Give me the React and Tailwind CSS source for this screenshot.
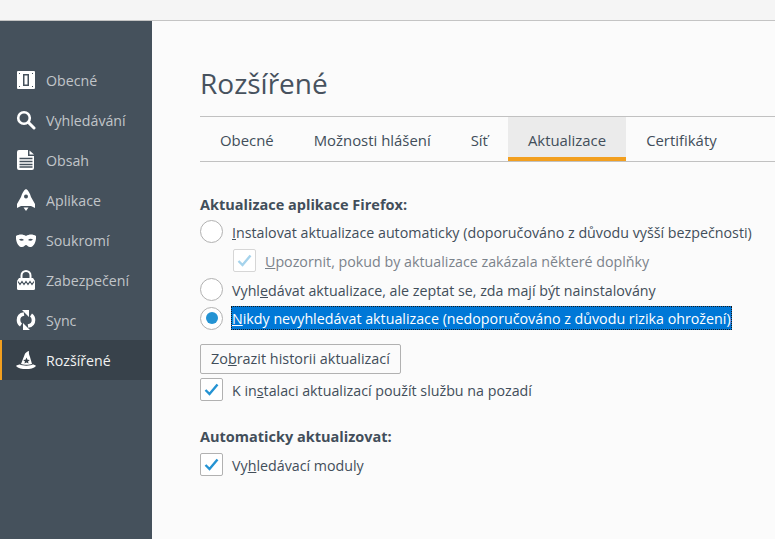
const font = { fontFamily: '"Open Sans", sans-serif' };

const sideItems = [
  { label: 'Obecné', icon: <GeneralIcon /> },
  { label: 'Vyhledávání', icon: <SearchIcon /> },
  { label: 'Obsah', icon: <ContentIcon /> },
  { label: 'Aplikace', icon: <AppsIcon /> },
  { label: 'Soukromí', icon: <MaskIcon /> },
  { label: 'Zabezpečení', icon: <LockIcon /> },
  { label: 'Sync', icon: <SyncIcon /> },
  { label: 'Rozšířené', icon: <WizardIcon />, active: true },
];

function GeneralIcon() {
  return (
    <svg width="18" height="18" viewBox="0 0 18 18">
      <path fillRule="evenodd" fill="#fff" d="M1 0h16a1 1 0 0 1 1 1v16a1 1 0 0 1-1 1H1a1 1 0 0 1-1-1V1a1 1 0 0 1 1-1zM6 3v12h6V3zM7.500 4.500h3v9h-3z" />
      <path fill="#45515c" d="M2 2h1v1H2zM15 2h1v1h-1zM2 15h1v1H2zM15 15h1v1h-1z" />
    </svg>
  );
}

function SearchIcon() {
  return (
    <svg width="20" height="20" viewBox="0 0 20 20" fill="none" stroke="#fff">
      <circle cx="8" cy="8" r="5.800" strokeWidth="2.600" />
      <path d="M12.500 12.500L18 18" strokeWidth="3" strokeLinecap="round" />
    </svg>
  );
}

function ContentIcon() {
  return (
    <svg width="18" height="20" viewBox="0 0 18 20">
      <path fill="#fff" d="M2 0h9v6h6v12a2 2 0 0 1-2 2H2a2 2 0 0 1-2-2V2a2 2 0 0 1 2-2zM12.500 .5L17 4.500h-4.500z" />
      <path stroke="#45515c" strokeWidth="1.300" d="M2.500 8.500h13M2.500 11.500h13M2.500 14.500h13M2.500 17h13" />
    </svg>
  );
}

function AppsIcon() {
  return (
    <svg width="18" height="22" viewBox="0 0 18 22">
      <path fill="#fff" d="M9 0c2 1 4 4 5 8l4 7v4l-4-2H4l-4 2v-4l4-7c1-4 3-7 5-8z" />
      <circle cx="9" cy="7.500" r="2" fill="#45515c" />
      <path fill="#fff" d="M6.500 18.500h5L9 22z" />
    </svg>
  );
}

function MaskIcon() {
  return (
    <svg width="20" height="13" viewBox="0 0 20 13">
      <path fillRule="evenodd" fill="#fff" d="M0 2c3-2 7-2 10 0 3-2 7-2 10 0 .5 5-2 11-6 11-2 0-3-2-4-2s-2 2-4 2C2 13-.500 7 0 2zM3 5.500c1.500-1 3.500-1 5 .5-1.500 1-3.500 1-5-.5zm14 0c-1.500-1-3.500-1-5 .5 1.500 1 3.500 1 5-.5z" />
    </svg>
  );
}

function LockIcon() {
  return (
    <svg width="18" height="20" viewBox="0 0 18 20">
      <path fill="none" stroke="#fff" strokeWidth="2" d="M4.500 8.500V5.500a4.500 4.500 0 0 1 9 0v3" />
      <path fill="#fff" d="M2 8h14l2 3v7.500a1.500 1.500 0 0 1-1.500 1.500h-15A1.500 1.500 0 0 1 0 18.500V11z" />
      <path fill="none" stroke="#45515c" strokeWidth="1.200" d="M1 11.500l2 3 2-3 2 3 2-3 2 3 2-3 2 3 2-3" />
    </svg>
  );
}

function SyncIcon() {
  return (
    <svg width="20" height="20" viewBox="0 0 20 20" fill="none" stroke="#fff" strokeWidth="3.600">
      <path d="M8 4C4.500 4.500 2.500 7 2.500 10c0 2 1 4 2.500 5" />
      <path d="M12 16c3.500-.5 5.500-3 5.500-6 0-2-1-4-2.500-5" />
      <path fill="#fff" stroke="none" d="M6 0h7v7zM14 20H7v-7z" />
    </svg>
  );
}

function WizardIcon() {
  return (
    <svg width="20" height="20" viewBox="0 0 20 20">
      <path fill="#fff" d="M13 1C11 1.500 9 3 8.500 5L5 14c2 1 9 1 11 0L14 7c-.5-2-1.500-3-1-6z" />
      <path fill="#fff" d="M0 16c1-1 3-1.500 4-1.500 2 1.500 11 1.500 12.500 0 1.500 0 2.500.5 3.500 1.500-2 2.500-6 3-10 3s-8-.5-10-3z" />
      <path fill="#38424b" d="M10.500 7.500l1 2.200 2.300.2-1.800 1.500.6 2.200-2.100-1.200-2.100 1.200.6-2.200-1.800-1.500 2.300-.2z" />
    </svg>
  );
}

function Radio({ checked }) {
  return (
    <span className="flex h-[23px] w-[23px] shrink-0 items-center justify-center rounded-full border border-[#b1b1b1] bg-white">
      {checked && <span className="h-[12px] w-[12px] rounded-full bg-[#2493d3]" />}
    </span>
  );
}

function Check({ disabled }) {
  return (
    <span className={`flex h-[23px] w-[23px] shrink-0 items-center justify-center rounded-[2px] border ${disabled ? 'border-[#d6d6d6]' : 'border-[#b1b1b1]'} bg-white`}>
      <svg width="15" height="13" viewBox="0 0 15 13" fill="none" stroke={disabled ? '#a5d3ec' : '#2493d3'} strokeWidth="2.400">
        <path d="M1.500 7l4 4L13.500 1.500" />
      </svg>
    </span>
  );
}

export default function App() {
  return (
    <div className="flex h-[539px] w-[775px] flex-col overflow-hidden bg-[#fbfbfb] text-[14.25px] text-[#424e5a]" style={font}>
      <div className="h-[21px] shrink-0 border-b border-[#c4c4c4] bg-[#f5f5f5]" />
      <div className="flex min-h-0 flex-1">
        <nav className="w-[152px] shrink-0 bg-[#45515c] pt-[39px] text-[14.2px]">
          {sideItems.map((item) => (
            <div
              key={item.label}
              className={`flex h-[40px] items-center border-l-[2px] pl-[14px] ${item.active ? 'border-[#f29f1f] bg-[#38424b] text-[#f2f2f2]' : 'border-transparent text-[#c1c5c9]'}`}
            >
              <span className="flex w-[20px] shrink-0 items-center justify-center">{item.icon}</span>
              <span className="ml-[10px] pt-[2px]">{item.label}</span>
            </div>
          ))}
        </nav>
        <main className="min-w-0 flex-1 pl-[48px]">
          <h1 className="mt-[43px] text-[28px] leading-[38px] font-normal text-[#47525e]">Rozšířené</h1>
          <div className="mt-[14px] flex h-[46px] border-y border-[#c1c1c1] text-[14.9px]">
            <div className="flex items-center px-[20px] pt-[2px]">Obecné</div>
            <div className="flex items-center px-[20px] pt-[2px]">Možnosti hlášení</div>
            <div className="flex items-center px-[20px] pt-[2px]">Síť</div>
            <div className="flex items-center border-b-[4px] border-[#f29f1f] bg-[#ebebeb] px-[20px] pt-[6px]">Aktualizace</div>
            <div className="flex items-center px-[20px] pt-[2px]">Certifikáty</div>
          </div>
          <h2 className="mt-[33px] text-[14.5px] leading-[19px] font-bold">Aktualizace aplikace Firefox:</h2>
          <div className="mt-[3px] flex h-[29px] items-center gap-[9px]">
            <Radio />
            <span className="pt-[2px]"><u>I</u>nstalovat aktualizace automaticky (doporučováno z důvodu vyšší bezpečnosti)</span>
          </div>
          <div className="flex h-[29px] items-center gap-[9px] pl-[33px] text-[#7b838b]">
            <Check disabled />
            <span className="pt-[2px]"><u>U</u>pozornit, pokud by aktualizace zakázala některé doplňky</span>
          </div>
          <div className="flex h-[29px] items-center gap-[9px]">
            <Radio />
            <span className="pt-[2px]">Vyhl<u>e</u>dávat aktualizace, ale zeptat se, zda mají být nainstalovány</span>
          </div>
          <div className="flex h-[28px] items-center gap-[8px]">
            <Radio checked />
            <span className="border border-dotted border-[#1a1a1a] bg-[#0078d7] pt-[1px] leading-[21px] text-white"><u>N</u>ikdy nevyhledávat aktualizace (nedoporučováno z důvodu rizika ohrožení)</span>
          </div>
          <button className="mt-[12px] block h-[30px] rounded-[2px] border border-[#b1b1b1] bg-[#fbfbfb] px-[10px] text-[14.4px]">Zo<u>b</u>razit historii aktualizací</button>
          <div className="mt-[1px] flex h-[29px] items-center gap-[9px]">
            <Check />
            <span className="pt-[2px]">K in<u>s</u>talaci aktualizací použít službu na pozadí</span>
          </div>
          <h2 className="mt-[23px] text-[14.5px] leading-[19px] font-bold">Automaticky aktualizovat:</h2>
          <div className="mt-[4px] flex h-[29px] items-center gap-[9px]">
            <Check />
            <span className="pt-[2px]">Vy<u>h</u>ledávací moduly</span>
          </div>
        </main>
      </div>
    </div>
  );
}
